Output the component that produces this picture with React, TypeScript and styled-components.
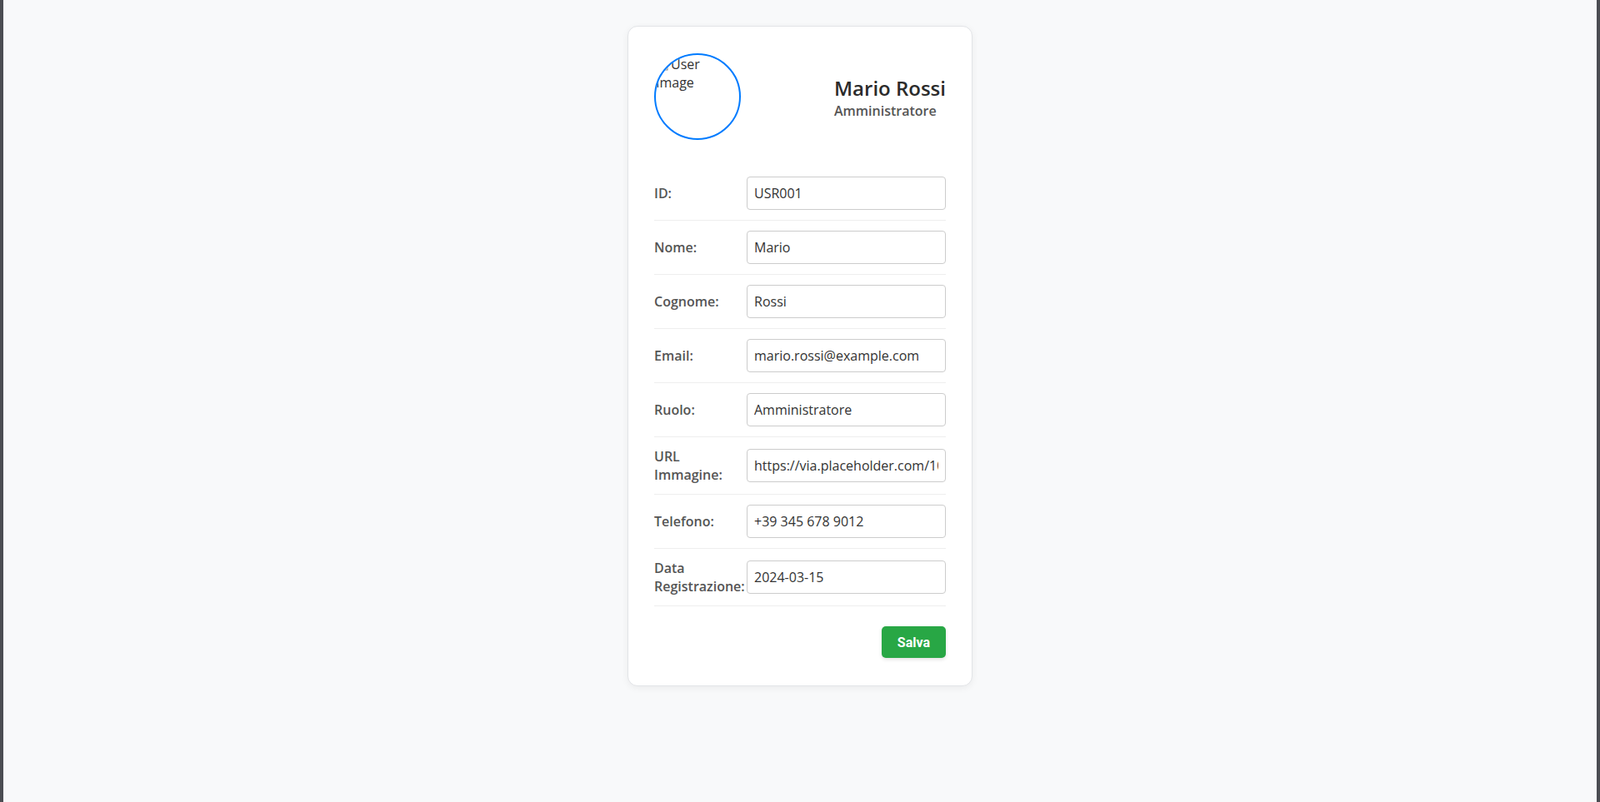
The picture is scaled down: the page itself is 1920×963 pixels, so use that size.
import React from "react";
import styled, { createGlobalStyle } from "styled-components";

const GlobalStyle = createGlobalStyle`
  html, body { margin: 0; padding: 0; }
  body {
    background: #f8f9fa;
    font-family: "Open Sans", "Noto Sans", sans-serif;
    color: #333;
  }
  * { box-sizing: border-box; }
`;

const Page = styled.div`
  min-height: 100vh;
  border-left: 4px solid #4b4d52;
  border-right: 4px solid #4b4d52;
  background: #f8f9fa;
  display: flex;
  justify-content: center;
  align-items: flex-start;
  padding-top: 31px;
`;

const Card = styled.div`
  width: 414px;
  background: #fff;
  border: 1px solid #e2e4e7;
  border-radius: 12px;
  box-shadow: 0 2px 8px rgba(0, 0, 0, 0.06);
  padding: 32px 31px 33px;
`;

const Header = styled.div`
  display: flex;
  justify-content: space-between;
  align-items: center;
  margin-bottom: 32px;
`;

const Avatar = styled.div`
  width: 104px;
  height: 104px;
  border: 2px solid #007bff;
  border-radius: 50%;
  overflow: hidden;
  font-size: 16px;
  color: #333;
  flex: 0 0 auto;
`;

const BrokenIcon = styled.svg`
  width: 16px;
  height: 16px;
  vertical-align: -2px;
  margin-right: 2px;
`;

const NameBlock = styled.div`
  text-align: left;
`;

const Name = styled.h2`
  margin: 0;
  font-size: 24px;
  font-weight: 600;
  color: #2b2b2b;
`;

const Role = styled.p`
  margin: 0;
  font-size: 16px;
  font-weight: 600;
  color: #555;
`;

const Row = styled.div`
  display: flex;
  align-items: center;
  padding: 12px 0;
  border-bottom: 1px solid #eee;
`;

const Label = styled.label`
  flex: 0 0 111px;
  font-size: 16px;
  font-weight: 600;
  color: #555;
`;

const Input = styled.input`
  flex: 1;
  min-width: 0;
  padding: 8px;
  border: 1px solid #ccc;
  border-radius: 4px;
  font-family: "Open Sans", "Noto Sans", sans-serif;
  font-size: 16px;
  color: #333;
  background: #fff;
  outline: none;
`;

const Actions = styled.div`
  display: flex;
  justify-content: flex-end;
  margin-top: 24px;
`;

const SaveButton = styled.button`
  background: #28a745;
  color: #fff;
  border: none;
  border-radius: 5px;
  padding: 9.5px 19px;
  font-family: Roboto, "Liberation Sans", sans-serif;
  font-size: 16px;
  font-weight: 700;
  box-shadow: 0 2px 4px rgba(0, 0, 0, 0.12);
  cursor: pointer;
`;

const fields: { label: string; value: string }[] = [
  { label: "ID:", value: "USR001" },
  { label: "Nome:", value: "Mario" },
  { label: "Cognome:", value: "Rossi" },
  { label: "Email:", value: "mario.rossi@example.com" },
  { label: "Ruolo:", value: "Amministratore" },
  { label: "URL Immagine:", value: "https://via.placeholder.com/100" },
  { label: "Telefono:", value: "+39 345 678 9012" },
  { label: "Data Registrazione:", value: "2024-03-15" },
];

export default function App() {
  return (
    <>
      <GlobalStyle />
      <Page>
        <Card>
          <Header>
            <Avatar>
              <BrokenIcon viewBox="0 0 16 16">
                <rect x="1" y="1" width="13" height="14" fill="#f0f0f0" stroke="#8a8a8a" />
                <path d="M3 12 L6 8 L8 10 L10 7 L13 12 Z" fill="#6fae4f" />
              </BrokenIcon>
              User Image
            </Avatar>
            <NameBlock>
              <Name>Mario Rossi</Name>
              <Role>Amministratore</Role>
            </NameBlock>
          </Header>
          {fields.map((f) => (
            <Row key={f.label}>
              <Label>{f.label}</Label>
              <Input type="text" defaultValue={f.value} />
            </Row>
          ))}
          <Actions>
            <SaveButton>Salva</SaveButton>
          </Actions>
        </Card>
      </Page>
    </>
  );
}
